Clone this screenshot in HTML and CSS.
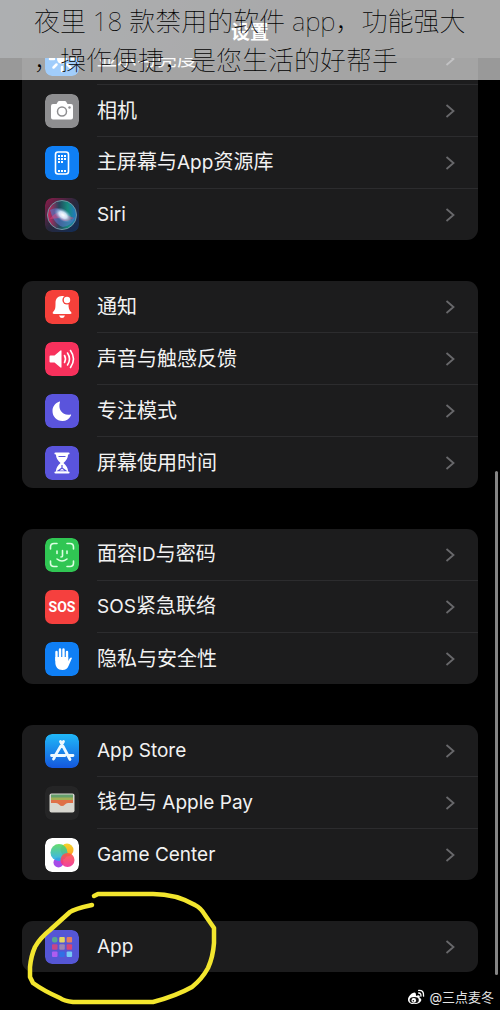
FILE: index.html
```html
<!DOCTYPE html>
<html lang="zh-CN">
<head>
  <meta charset="UTF-8">
  <meta name="viewport" content="width=device-width, initial-scale=1">
  <title>设置</title>
  <link rel="stylesheet" href="styles.css">
</head>
<body>

<header class="navbar">
  <h1>设置</h1>
</header>

<div class="banner">
  <p>夜里 18 款禁用的软件 app，功能强大，操作便捷，是您生活的好帮手</p>
</div>

<!-- Chevron shared by every row -->
<svg class="defs" width="0" height="0">
  <symbol id="chevron" viewBox="0 0 10 16"><path d="M1.5 2 8.5 8l-7 6" fill="none" stroke="currentColor" stroke-width="1.8"/></symbol>
</svg>

<main class="settings">
  <!-- Display, camera, home screen -->
  <nav class="group">
    <a class="row" href="#">
      <svg class="icon" viewBox="0 0 34 34"><rect width="34" height="34" rx="7" fill="#1483f5"/><circle cx="17" cy="17" r="5" fill="#fff"/><path d="M17 5v4M17 25v4M5 17h4M25 17h4M8.500 8.500l3 3M22.500 22.500l3 3M25.500 8.500l-3 3M11.500 22.500l-3 3" stroke="#fff" stroke-width="2.500" stroke-linecap="round"/></svg>
      <span class="label">显示与亮度</span><svg class="chevron"><use href="#chevron"/></svg>
    </a>
    <a class="row" href="#">
      <svg class="icon" viewBox="0 0 34 34"><rect width="34" height="34" rx="7" fill="#8e8e90"/><path d="M8 10h3.500l1.500-2.500q.5-.5 1-.5h6q.6 0 1 .5l1.500 2.500H26q2 0 2 2v11.500q0 2-2 2H8q-2 0-2-2V12q0-2 2-2z" fill="#fff"/><circle cx="17" cy="17.500" r="4.500" fill="none" stroke="#8e8e90" stroke-width="1.500"/><circle cx="24.500" cy="13.500" r="1.200" fill="#8e8e90"/></svg>
      <span class="label">相机</span><svg class="chevron"><use href="#chevron"/></svg>
    </a>
    <a class="row" href="#">
      <svg class="icon" viewBox="0 0 34 34"><rect width="34" height="34" rx="7" fill="#0f7ff5"/><rect x="10.500" y="6" width="13" height="22" rx="2.500" fill="none" stroke="#fff" stroke-width="1.600"/><path d="M13 10h2M16 10h2M19 10h2M13 13h2M16 13h2M19 13h2M13 16h2M16 16h2M13 25h2M16 25h2M19 25h2" stroke="#fff" stroke-width="1.800"/></svg>
      <span class="label">主屏幕与<span class="latin">App</span>资源库</span><svg class="chevron"><use href="#chevron"/></svg>
    </a>
    <a class="row" href="#">
      <svg class="icon" viewBox="0 0 34 34">
        <defs>
          <linearGradient id="siri-bg" x1="0" x2="1" y1="0" y2="1"><stop offset="0" stop-color="#8c1c4a"/><stop offset=".5" stop-color="#28283c"/><stop offset="1" stop-color="#102d58"/></linearGradient>
          <linearGradient id="siri-orb" x1="0" x2="1"><stop offset="0" stop-color="#d3245d"/><stop offset=".4" stop-color="#24455c"/><stop offset=".7" stop-color="#168b7d"/><stop offset="1" stop-color="#2476c5"/></linearGradient>
          <radialGradient id="siri-glow"><stop offset="0" stop-color="#fff"/><stop offset=".45" stop-color="#d9edff" stop-opacity=".9"/><stop offset="1" stop-color="#7aa7e0" stop-opacity="0"/></radialGradient>
        </defs>
        <rect width="34" height="34" rx="7" fill="url(#siri-bg)"/><circle cx="17" cy="17" r="14.500" fill="url(#siri-orb)" stroke="#7197a3" stroke-width="1"/><path d="M5 12q10-5 13 5t12 2q-3 9-12 10-7-2-11-11z" fill="#5877c9" opacity=".6"/><path d="M5 21q7-10 14-5l10 4q-10 6-14 0z" fill="#e4487f" opacity=".5"/><ellipse cx="18" cy="17" rx="10" ry="6" transform="rotate(35 18 17)" fill="url(#siri-glow)"/>
      </svg>
      <span class="label latin">Siri</span><svg class="chevron"><use href="#chevron"/></svg>
    </a>
  </nav>

  <!-- Notifications and focus -->
  <nav class="group">
    <a class="row" href="#">
      <svg class="icon" viewBox="0 0 34 34"><rect width="34" height="34" rx="7" fill="#f5403a"/><path d="M17 6c-4.500 0-6.500 3-6.500 7 0 6-.5 7-2.500 9-.8 1 0 2 1 2h16c1.500 0 2-1 1-2-2-2-2.500-4-2.500-8-1-7-4-8-6.500-8zM14 25.500h6q-1 2.500-3 2.500t-3-2.500z" fill="#fff"/><circle cx="22" cy="10" r="4.600" fill="#f5403a"/><circle cx="22" cy="10" r="3.200" fill="#fff"/></svg>
      <span class="label">通知</span><svg class="chevron"><use href="#chevron"/></svg>
    </a>
    <a class="row" href="#">
      <svg class="icon" viewBox="0 0 34 34"><rect width="34" height="34" rx="7" fill="#f7315c"/><path d="M5.500 13.500h4l6-5q1-.5 1 .5v16q0 1-1 .5l-6-5h-4q-1 0-1-1v-5q0-1 1-1z" fill="#fff"/><path d="M19.500 13.500q2 3.500 0 7M22.500 11q4 6 0 12M25.500 8.500q6 8.500 0 17" fill="none" stroke="#fff" stroke-width="1.600" stroke-linecap="round"/></svg>
      <span class="label">声音与触感反馈</span><svg class="chevron"><use href="#chevron"/></svg>
    </a>
    <a class="row" href="#">
      <svg class="icon" viewBox="0 0 34 34"><rect width="34" height="34" rx="7" fill="#5a54dc"/><path d="M14.500 7.500q.8-.4.5.6c-2.500 8 3 14 10.500 12.500q1-.2.500.8c-2 4-5 5.600-8.500 5.600-6 0-10-4.500-10-10 0-4.500 2.500-8 7-9.500z" fill="#fff"/></svg>
      <span class="label">专注模式</span><svg class="chevron"><use href="#chevron"/></svg>
    </a>
    <a class="row" href="#">
      <svg class="icon" viewBox="0 0 34 34"><rect width="34" height="34" rx="7" fill="#5a54dc"/><path d="M11 7h12v2q0 4-4.500 8 4.500 4 4.500 8v2H11v-2q0-4 4.500-8Q11 13 11 9z" fill="#fff"/><path d="M17 19v3l4 3h-8l4-3M13.500 10.500h7" fill="none" stroke="#5a54dc" stroke-width="1.200"/><path d="M10.500 7.500h13M10.500 26.500h13" stroke="#fff" stroke-width="2.200" stroke-linecap="round"/></svg>
      <span class="label">屏幕使用时间</span><svg class="chevron"><use href="#chevron"/></svg>
    </a>
  </nav>

  <!-- Security -->
  <nav class="group">
    <a class="row" href="#">
      <svg class="icon" viewBox="0 0 34 34"><rect width="34" height="34" rx="7" fill="#30c653"/><path d="M5.500 11V9q0-3.500 3.500-3.500h3M22 5.500h3q3.500 0 3.500 3.500v2M28.500 23v2q0 3.500-3.500 3.500h-3M12 28.500H9q-3.500 0-3.500-3.500v-2M12 13v2.500M22 13v2.500M17.500 12.500V18q0 1-1.500 1M12 21q5 4 10 0" fill="none" stroke="#dcffe2" stroke-width="1.600" stroke-linecap="round"/></svg>
      <span class="label">面容<span class="latin">ID</span>与密码</span><svg class="chevron"><use href="#chevron"/></svg>
    </a>
    <a class="row" href="#">
      <span class="icon icon-sos">SOS</span>
      <span class="label"><span class="latin">SOS</span>紧急联络</span><svg class="chevron"><use href="#chevron"/></svg>
    </a>
    <a class="row" href="#">
      <svg class="icon" viewBox="0 0 34 34"><rect width="34" height="34" rx="7" fill="#0f7ff5"/><path d="M11.500 18V10M15 17V7.500M18.500 17V7.500M22 18v-8" stroke="#fff" stroke-width="2.400" stroke-linecap="round"/><path d="M10.300 15h12.900v4l1.500-2.500q1.300-1.500 2.300-.5l-3.500 8q-1.500 4-6 4c-5 0-7.200-3.500-7.200-8z" fill="#fff"/></svg>
      <span class="label">隐私与安全性</span><svg class="chevron"><use href="#chevron"/></svg>
    </a>
  </nav>

  <!-- Apple services -->
  <nav class="group">
    <a class="row" href="#">
      <svg class="icon" viewBox="0 0 34 34"><defs><linearGradient id="store" x2="0" y2="1"><stop offset="0" stop-color="#20b8f8"/><stop offset="1" stop-color="#1457dd"/></linearGradient></defs><rect width="34" height="34" rx="7" fill="url(#store)"/><path d="M15.500 7.500 25 25.500M18.500 7.500 10.500 21M8.500 25l1-1.500M6.500 21.500H20M24 21.500h4" fill="none" stroke="#eef9ff" stroke-width="2.800" stroke-linecap="round"/></svg>
      <span class="label latin">App Store</span><svg class="chevron"><use href="#chevron"/></svg>
    </a>
    <a class="row" href="#">
      <svg class="icon" viewBox="0 0 34 34"><rect width="34" height="34" rx="7" fill="#252526"/><rect x="4.500" y="7.500" width="25" height="19" rx="2" fill="#d8d7d0"/><path d="M6 8.500h22v4H6z" fill="#659f6c"/><path d="M6 11.500h22v3H6z" fill="#a2ae54"/><path d="M6 14h22v4l-8 3h-6l-8-3z" fill="#df7048"/><path d="M5 17h6q2 0 3 1.500 3 3 6 0 1-1.500 3-1.500h6v9H5z" fill="#d8d7d0"/></svg>
      <span class="label">钱包与<span class="latin"> Apple Pay</span></span><svg class="chevron"><use href="#chevron"/></svg>
    </a>
    <a class="row" href="#">
      <svg class="icon" viewBox="0 0 34 34"><defs><linearGradient id="gc-a" x2="0" y2="1"><stop offset="0" stop-color="#54d85d"/><stop offset="1" stop-color="#22a9f4"/></linearGradient><linearGradient id="gc-b" x2="0" y2="1"><stop offset="0" stop-color="#f4d52b"/><stop offset="1" stop-color="#ff9b25"/></linearGradient><linearGradient id="gc-c" x2="0" y2="1"><stop offset="0" stop-color="#ff593e"/><stop offset="1" stop-color="#ef2a96"/></linearGradient></defs><rect width="34" height="34" rx="7" fill="#fff"/><circle cx="22" cy="12" r="6.500" fill="url(#gc-b)"/><circle cx="13.500" cy="24.500" r="5" fill="#a64be8"/><circle cx="14" cy="14.500" r="8.500" fill="url(#gc-a)" opacity=".9"/><circle cx="22.500" cy="22" r="7" fill="url(#gc-c)" opacity=".9"/></svg>
      <span class="label latin">Game Center</span><svg class="chevron"><use href="#chevron"/></svg>
    </a>
  </nav>

  <!-- Apps, with the hand drawn marker round it -->
  <nav class="group">
    <a class="row" href="#">
      <svg class="icon" viewBox="0 0 34 34"><rect width="34" height="34" rx="7" fill="#5556d5"/><rect x="7" y="7" width="5.500" height="5.500" rx="2" fill="#59a692"/><rect x="14.300" y="7" width="5.500" height="5.500" rx="1" fill="#e5d660"/><rect x="21.600" y="7" width="5.500" height="5.500" rx="1" fill="#e17f61"/><rect x="7" y="14.300" width="5.500" height="5.500" rx="1" fill="#c84687"/><rect x="14.300" y="14.300" width="5.500" height="5.500" rx="1" fill="#9b86b3"/><rect x="21.600" y="14.300" width="5.500" height="5.500" rx="1" fill="#d84476"/><rect x="7" y="21.600" width="5.500" height="5.500" rx="1" fill="#ae5cf0"/><rect x="14.300" y="21.600" width="5.500" height="5.500" rx="1" fill="#316fe5"/><rect x="21.600" y="21.600" width="5.500" height="5.500" rx="1" fill="#75c9f4"/></svg>
      <span class="label latin">App</span><svg class="chevron"><use href="#chevron"/></svg>
    </a>
    <svg class="marker" viewBox="0 0 190 114"><path d="M66 5 70 3H125Q148 3 167 14 173 17 177 24L186 37V52Q185 66 180 77 174 88 164 96 148 105 125 111H45Q36 110 32 107 16 100 5 92L2 86V76Q3 65 7 56 12 47 22 39L42 21Q46 18 64 14" fill="none" stroke="#f3e62e" stroke-width="4.500" stroke-linecap="round" stroke-linejoin="round"/></svg>
  </nav>
</main>

<div class="scrollbar"></div>

<footer class="watermark">
  <svg class="weibo" viewBox="0 0 20 18"><path d="M8 4C4 5 1 9 1 12c0 3 3 5 7 5 5 0 8-3 8-5 0-1-1-2-2-2 1-3-1-4-4-2 0-2 0-4-2-4z" fill="#fff"/><ellipse cx="8" cy="12.500" rx="5.200" ry="3.600" fill="#111"/><circle cx="7.500" cy="12.800" r="2.600" fill="#fff"/><circle cx="7" cy="13.200" r=".9" fill="#111"/><path d="M13 4.500q3 0 2.500 3.500M13 1.500q6-.5 5.500 6.500" fill="none" stroke="#fff" stroke-width="1.500" stroke-linecap="round"/></svg>
  <span>@三点麦冬</span>
</footer>

</body>
</html>
```
FILE: styles.css
```css
:root {
  --card: #1c1c1d;
  --line: #2c2c2e;
  --text: #f2f2f2;
  --chevron: #68686b;
}

* {
  box-sizing: border-box;
}

body {
  position: relative;
  margin: 0;
  background: #000;
  color: var(--text);
  font-family: Inter, "Noto Sans CJK SC", sans-serif;
}

/* bars over the scrolled list */
.navbar {
  position: absolute;
  top: 0;
  left: 0;
  right: 0;
  z-index: 1;
  height: 58px;
  padding-top: 20px;
  background: linear-gradient(100deg, #34393d, #28282a 60%);
}

.navbar h1 {
  margin: 0;
  font-size: 19px;
  line-height: 26px;
  font-weight: 700;
  text-align: center;
  color: #fff;
}

.banner {
  position: absolute;
  top: 0;
  left: 0;
  right: 0;
  z-index: 3;
  height: 80px;
  padding: 2px 20px 0 34px;
  background: rgba(255, 255, 255, 0.6);
}

.banner p {
  margin: 0;
  color: #000;
  font-family: "Noto Sans", "Noto Sans CJK SC", sans-serif;
  font-size: 26px;
  font-weight: 100;
  line-height: 39px;
  line-break: anywhere;
}

.defs {
  position: absolute;
}

.settings {
  display: flex;
  flex-direction: column;
  gap: 41px;
  padding: 33px 22px 0;
}

.group {
  position: relative;
  background: var(--card);
  border-radius: 11px;
}

.row {
  position: relative;
  display: flex;
  align-items: center;
  gap: 18px;
  height: 51px;
  padding: 0 23px;
  color: inherit;
  text-decoration: none;
}

.row + .row {
  margin-top: 1px;
}

.row + .row::before {
  content: "";
  position: absolute;
  top: -1px;
  left: 75px;
  right: 0;
  height: 1px;
  background: var(--line);
}

.icon {
  flex: none;
  width: 34px;
  height: 34px;
  border-radius: 7px;
}

.icon-sos {
  display: flex;
  align-items: center;
  justify-content: center;
  background: #f5403e;
  color: #fff;
  font-family: Roboto, sans-serif;
  font-size: 14px;
  font-weight: 700;
}

.label {
  flex: 1;
  font-size: 20px;
  line-height: 28px;
}

.latin {
  font-size: 19px;
}

.chevron {
  flex: none;
  width: 10px;
  height: 16px;
  color: var(--chevron);
}

.marker {
  position: absolute;
  top: -30px;
  left: 6px;
  z-index: 2;
  width: 190px;
  height: 114px;
  overflow: visible;
}

.scrollbar {
  position: absolute;
  top: 471px;
  right: 2px;
  width: 3px;
  height: 504px;
  border-radius: 2px;
  background: #858585;
}

.watermark {
  display: flex;
  align-items: center;
  justify-content: flex-end;
  gap: 4px;
  padding: 16px 6px 4px;
  color: #e6e6e6;
  font-size: 13px;
  line-height: 18px;
}

.weibo {
  width: 18px;
  height: 16px;
}
```
